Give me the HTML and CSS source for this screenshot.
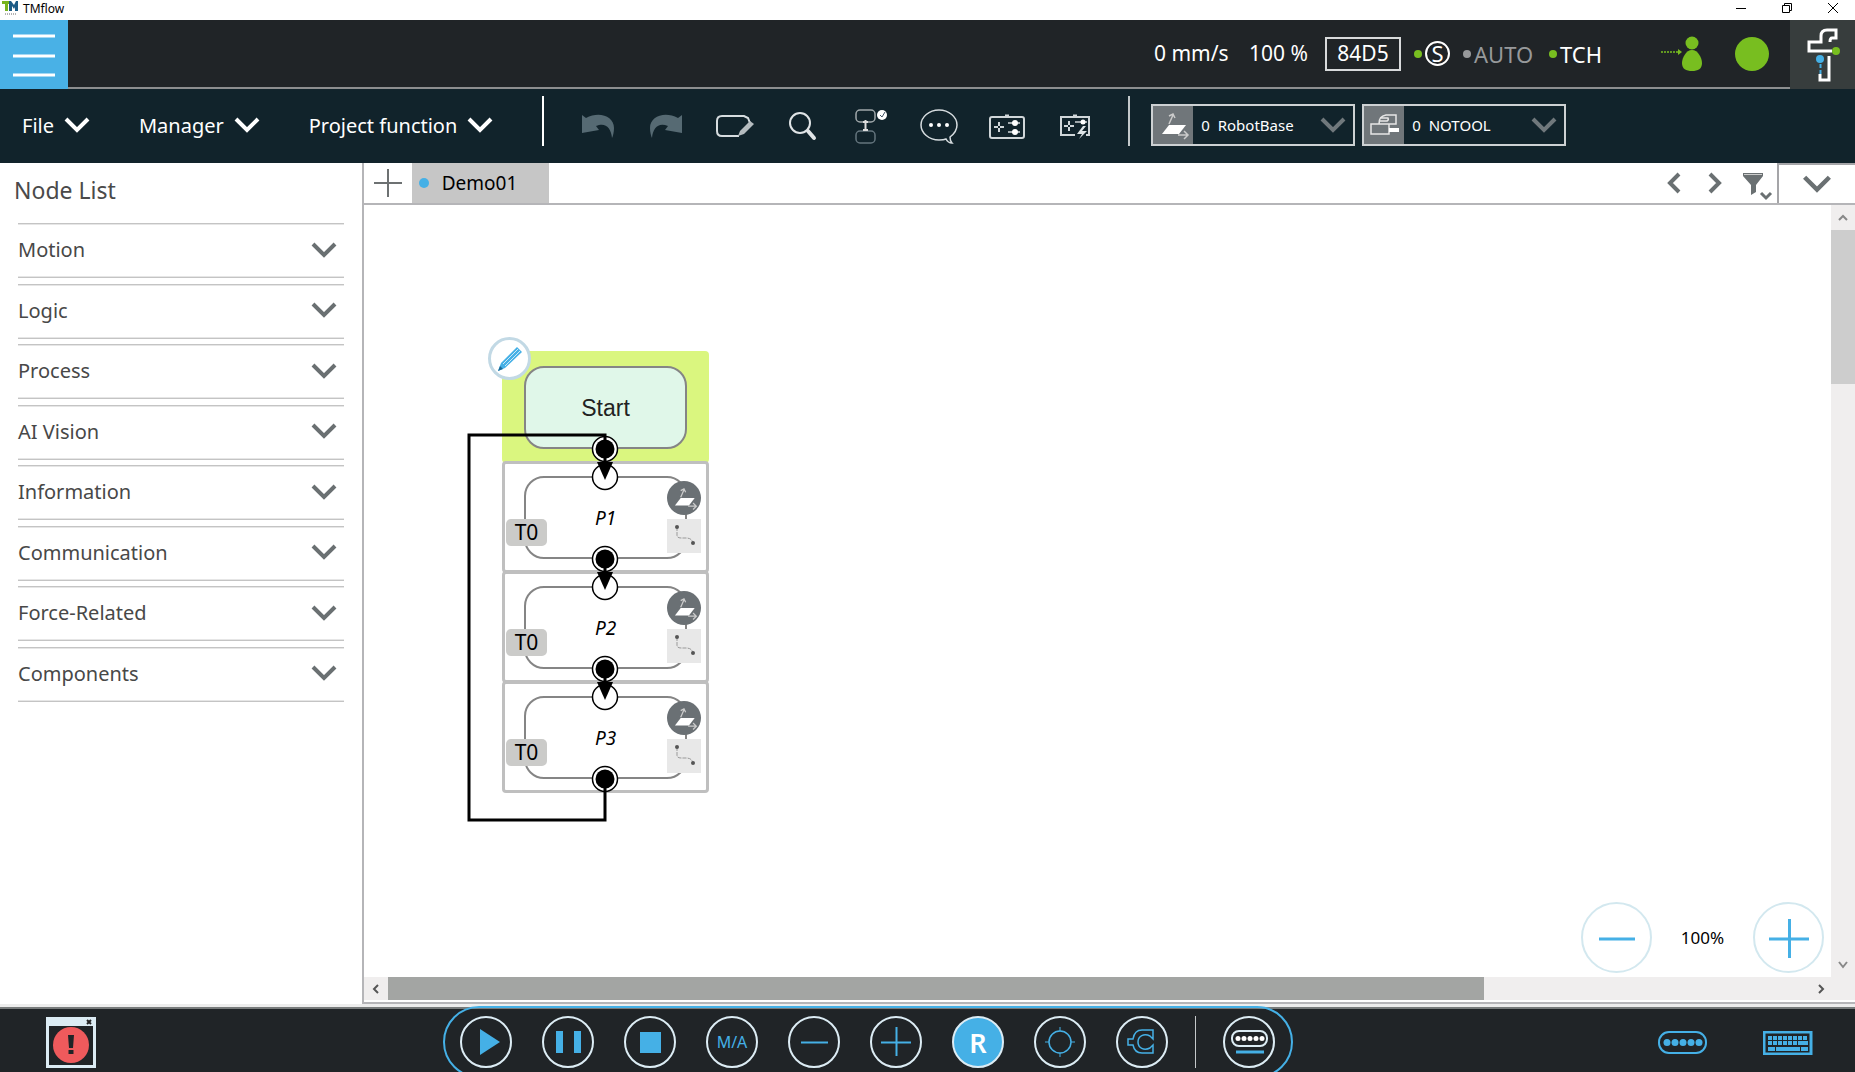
FILE: index.html
```html
<!DOCTYPE html>
<html lang="en">
<head>
<meta charset="utf-8">
<title>TMflow</title>
<link rel="stylesheet" href="styles.css">
</head>
<body>
<svg class="defs" width="0" height="0" aria-hidden="true">
  <symbol id="chev" viewBox="0 0 26 16"><path d="M2 2l11 11L24 2" fill="none" stroke="currentColor" stroke-width="4"/></symbol>
  <symbol id="base" viewBox="0 0 34 34"><path d="M13 17h17l-7 9H6z" fill="#fff"/><path d="M13 16l4-9M13 8l4-2 2 4M22 27h9M28 23l4 4-4 4" fill="none" stroke="#ccc" stroke-width="1.500"/></symbol>
</svg>
<div class="app">
  <div class="titlebar">
    <svg width="16" height="14" viewBox="0 0 16 14"><path d="M0 0h8v3H6v7H3V3H0z" fill="#78b41e"/><path d="M7 10V0h2l3 4 2-4h2v10h-3V6l-1 2-2-3v5z" fill="#1d5c86"/><path d="M3 13h11" stroke="#666" stroke-dasharray="1 1"/></svg>
    <span class="apptitle">TMflow</span>
    <button class="win" aria-label="Minimize"><svg width="12" height="12"><path d="M1 6.500h10" stroke="#000"/></svg></button>
    <button class="win" aria-label="Restore"><svg width="12" height="12"><path d="M1.500 3.500h7v7h-7zM3.500 3.500v-2h7v7h-2" fill="none" stroke="#000"/></svg></button>
    <button class="win" aria-label="Close"><svg width="12" height="12"><path d="M1 1l10 10M11 1L1 11" stroke="#000"/></svg></button>
  </div>

  <header class="header">
    <button class="burger" aria-label="Menu"><svg width="68" height="68"><path d="M13 15h42M13 35h42M13 54h42" stroke="#fff" stroke-width="3"/></svg></button>
    <div class="status">
      <span class="speed">0 mm/s</span>
      <span class="percent">100 %</span>
      <span class="code">84D5</span>
      <span class="flag safe"><i class="dot on"></i><span class="ring">S</span></span>
      <span class="flag auto"><i class="dot"></i>AUTO</span>
      <span class="flag"><i class="dot on"></i>TCH</span>
    </div>
    <svg class="person" width="42" height="36" viewBox="0 0 42 36"><g fill="#78be20"><circle cx="31" cy="7" r="6.500"/><path d="M31 14c6 0 10 8 10 13 0 6-4 8-10 8s-10-2-10-8c0-5 4-13 10-13z"/><path d="M17 13l4 3-4 3z"/></g><path d="M0 16h18" stroke="#78be20" stroke-width="1.500" stroke-dasharray="2 1"/></svg>
    <span class="lamp"></span>
    <button class="robot" aria-label="Robot"><svg width="65" height="68" viewBox="0 0 65 68"><g fill="none" stroke="#fff" stroke-width="3"><path d="M42 30H19v-9h12v-6q0-6 6-6h9v8h-4q-2 0-2 4"/><path d="M39 35v24H30V53"/></g><circle cx="46" cy="30" r="4" fill="#78be20"/><circle cx="30" cy="38" r="4" fill="#45b0e6"/><path d="M30.500 43v10" stroke="#45b0e6" stroke-width="2" stroke-dasharray="4 2"/></svg></button>
  </header>

  <nav class="toolbar">
    <button class="menu">File <svg width="26" height="16"><use href="#chev"/></svg></button>
    <button class="menu">Manager <svg width="26" height="16"><use href="#chev"/></svg></button>
    <button class="menu">Project function <svg width="26" height="16"><use href="#chev"/></svg></button>
    <span class="rule"></span>
    <div class="tools">
      <button aria-label="Undo"><svg width="40" height="40" viewBox="0 0 40 40"><path d="M4 10l4 3c13-7 28-2 28 10 0 4-1 8-2 10-1-11-7-16-16-12l3 4-17 3z" fill="#566a73"/></svg></button>
      <button aria-label="Redo"><svg width="40" height="40" viewBox="0 0 40 40"><path d="M36 10l-4 3C19 6 4 11 4 23c0 4 1 8 2 10 1-11 7-16 16-12l-3 4 17 3z" fill="#566a73"/></svg></button>
      <button aria-label="Edit"><svg width="40" height="40" viewBox="0 0 40 40"><path d="M35 18l-2-5-4-2H7q-5 0-5 5v10q0 5 5 5h17" fill="none" stroke="#d6dcdf" stroke-width="2"/><path d="M23 31l2-5 10-10 4 3-10 10z" fill="#b5bcbf"/></svg></button>
      <button aria-label="Search"><svg width="40" height="40" viewBox="0 0 40 40"><circle cx="17" cy="18" r="10" fill="none" stroke="#e0e4e6" stroke-width="2"/><path d="M25 26l6 7" stroke="#e0e4e6" stroke-width="4" stroke-linecap="round"/></svg></button>
      <button aria-label="Check flow"><svg width="40" height="40" viewBox="0 0 40 40"><g fill="none" stroke-width="1.500"><rect x="5" y="5" width="19" height="12" rx="4" stroke="#a0a8ab"/><rect x="5" y="26" width="19" height="12" rx="4" stroke="#64757e"/></g><path d="M14.500 15v10M12 17h5M12 25h5" stroke="#ddd" stroke-width="2"/><circle cx="31" cy="10" r="5" fill="#fff"/><path d="M29 10l2 2 3-5" fill="none" stroke="#456"/></svg></button>
      <button aria-label="Comment"><svg width="40" height="40" viewBox="0 0 40 40"><path d="M31 32c4-3 7-7 7-12 0-8-8-15-18-15S2 12 2 20s8 15 18 15c3 0 5 0 7-1q2 4 6 4-2-2-2-6z" fill="none" stroke="#d6dcdf" stroke-width="1.500"/><g fill="#fff"><circle cx="12" cy="20" r="2"/><circle cx="20" cy="20" r="2"/><circle cx="28" cy="20" r="2"/></g></svg></button>
      <button aria-label="Controller"><svg width="40" height="40" viewBox="0 0 40 40"><g fill="none" stroke="#d0d6d9" stroke-width="2"><rect x="3" y="12" width="34" height="21" rx="2"/><path d="M18 11h4" stroke-width="3"/><path d="M7 22h10M12 17v10" stroke-dasharray="4 2"/><path d="M21 18h12M21 27h12" stroke-width="1.500"/></g><circle cx="28" cy="18" r="3" fill="#fff"/><circle cx="28" cy="27" r="3" fill="#fff"/></svg></button>
      <button aria-label="Quick controller"><svg width="40" height="40" viewBox="0 0 40 40"><g fill="none" stroke="#d0d6d9" stroke-width="2"><path d="M20 30H6V12h28v18h-3"/><path d="M18 11h4" stroke-width="3"/><path d="M9 21h10M14 16v10" stroke-dasharray="4 2"/><path d="M20 17h12" stroke-width="1.500"/></g><circle cx="28" cy="17" r="2.500" fill="#fff"/><path d="M28 21l-6 8h5l-3 5 8-8h-5l4-5z" fill="#dfe5e8"/></svg></button>
    </div>
    <span class="rule second"></span>
    <label class="combo"><span class="comboicon"><svg width="36" height="34"><use href="#base"/></svg></span>
      <select aria-label="Base"><option>0&nbsp; RobotBase</option></select>
      <svg class="arrow" width="26" height="16"><use href="#chev"/></svg></label>
    <label class="combo"><span class="comboicon"><svg width="36" height="34" viewBox="0 0 36 34"><path d="M5 16h18v10H5zM13 16c0-6 2-8 7-9h10v9h-7M14 13h7q2-1 1-3H15" fill="none" stroke="#e6e6e6" stroke-width="1.500"/><path d="M23 20h10v4H23z" fill="#fff"/></svg></span>
      <select aria-label="Tool"><option>0&nbsp; NOTOOL</option></select>
      <svg class="arrow" width="26" height="16"><use href="#chev"/></svg></label>
  </nav>

  <main class="work">
    <aside class="sidebar">
      <h2>Node List</h2>
      <div class="groups">
        <button>Motion <svg width="26" height="16"><use href="#chev"/></svg></button>
        <button>Logic <svg width="26" height="16"><use href="#chev"/></svg></button>
        <button>Process <svg width="26" height="16"><use href="#chev"/></svg></button>
        <button>AI Vision <svg width="26" height="16"><use href="#chev"/></svg></button>
        <button>Information <svg width="26" height="16"><use href="#chev"/></svg></button>
        <button>Communication <svg width="26" height="16"><use href="#chev"/></svg></button>
        <button>Force-Related <svg width="26" height="16"><use href="#chev"/></svg></button>
        <button>Components <svg width="26" height="16"><use href="#chev"/></svg></button>
      </div>
    </aside>
    <section class="editor">
      <div class="tabs">
        <button class="add" aria-label="Add tab"><svg width="30" height="30"><path d="M1 15h28M15 1v28" stroke="#6d7172" stroke-width="2"/></svg></button>
        <button class="tab"><i></i>Demo01</button>
        <div class="tabtools">
          <button aria-label="Previous"><svg width="14" height="22"><path d="M12 2L3 11l9 9" fill="none" stroke="#6a7072" stroke-width="4"/></svg></button>
          <button aria-label="Next"><svg width="14" height="22"><path d="M2 2l9 9-9 9" fill="none" stroke="#6a7072" stroke-width="4"/></svg></button>
          <button aria-label="Filter"><svg width="32" height="30"><path d="M2 2h20v3l-7 9v7l-5 3V14L2 5z" fill="#6a7072"/><path d="M3 3.500h18" stroke="#ccc"/><path d="M20 22l5 5 5-5" fill="none" stroke="#6a7072" stroke-width="3"/></svg></button>
        </div>
        <button class="more" aria-label="More tabs"><svg width="30" height="18" viewBox="0 0 26 16"><use href="#chev"/></svg></button>
      </div>
      <div class="canvas">
        <div class="frame start"><div class="node">Start</div></div>
        <div class="frame p1"><div class="node">P1</div><span class="tool">T0</span><span class="basebadge"><svg width="28" height="28"><use href="#base"/></svg></span><span class="path"><svg width="34" height="34"><path d="M10 8v8q0 3 4 3h5q6 0 7 5" fill="none" stroke="#999" stroke-dasharray="4 1"/><circle cx="10" cy="8" r="2" fill="#555"/><circle cx="26" cy="24" r="2" fill="#555"/></svg></span></div>
        <div class="frame p2"><div class="node">P2</div><span class="tool">T0</span><span class="basebadge"><svg width="28" height="28"><use href="#base"/></svg></span><span class="path"><svg width="34" height="34"><path d="M10 8v8q0 3 4 3h5q6 0 7 5" fill="none" stroke="#999" stroke-dasharray="4 1"/><circle cx="10" cy="8" r="2" fill="#555"/><circle cx="26" cy="24" r="2" fill="#555"/></svg></span></div>
        <div class="frame p3"><div class="node">P3</div><span class="tool">T0</span><span class="basebadge"><svg width="28" height="28"><use href="#base"/></svg></span><span class="path"><svg width="34" height="34"><path d="M10 8v8q0 3 4 3h5q6 0 7 5" fill="none" stroke="#999" stroke-dasharray="4 1"/><circle cx="10" cy="8" r="2" fill="#555"/><circle cx="26" cy="24" r="2" fill="#555"/></svg></span></div>
        <svg class="wires" width="380" height="640">
          <defs><g id="port"><circle r="12.500" fill="#fff" stroke="#000" stroke-width="1.500"/><circle r="9.500"/></g>
          <g id="link"><circle cy="28" r="12.500" fill="#fff" stroke="#000" stroke-width="1.500"/><path d="M0 0v16" stroke="#000" stroke-width="3"/><path d="M-8 13H8L0 31z"/></g></defs>
          <use href="#port" x="241" y="244"/><use href="#link" x="241" y="244"/>
          <use href="#port" x="241" y="354"/><use href="#link" x="241" y="354"/>
          <use href="#port" x="241" y="464"/><use href="#link" x="241" y="464"/>
          <use href="#port" x="241" y="574"/>
          <path d="M241 574v41H105V230h136v10" fill="none" stroke="#000" stroke-width="3"/>
        </svg>
        <button class="pencil" aria-label="Edit start"><svg width="38" height="38"><path d="M7 31l3-8L26 7l5 5-17 16z" fill="#45b0e6"/><path d="M12 24L27 9M14 26l15-15" stroke="#cbe8f7"/><path d="M7 31l2-5 3 3z" fill="#1a6a98"/></svg></button>
        <div class="zoom">
          <button aria-label="Zoom out"><svg width="66" height="66"><path d="M15 34h36" stroke="#45b0e6" stroke-width="3"/></svg></button>
          <span>100%</span>
          <button aria-label="Zoom in"><svg width="66" height="66"><path d="M13 34h40M33.500 14v39" stroke="#45b0e6" stroke-width="3"/></svg></button>
        </div>
      </div>
      <div class="vbar"><button aria-label="Up"><svg width="10" height="8"><path d="M1 6l4-4 4 4" fill="none" stroke="#888" stroke-width="2"/></svg></button><span></span><button class="last" aria-label="Down"><svg width="10" height="8"><path d="M1 1l4 5 4-5" fill="none" stroke="#888" stroke-width="2"/></svg></button></div>
      <div class="hbar"><button aria-label="Left"><svg width="8" height="10"><path d="M6 1L2 5l4 4" fill="none" stroke="#555" stroke-width="2"/></svg></button><span></span><button class="last" aria-label="Right"><svg width="8" height="10"><path d="M2 1l4 4-4 4" fill="none" stroke="#555" stroke-width="2"/></svg></button></div>
    </section>
  </main>

  <footer class="footer">
    <button class="alert" aria-label="Errors"><svg width="50" height="51"><rect x="1.500" y="1.500" width="47" height="48" fill="none" stroke="#dcecf4" stroke-width="3"/><path d="M1 1h48v8H1z" fill="#dcecf4"/><path d="M41 3l4 4M45 3l-4 4" stroke="#222" stroke-width="2"/><circle cx="25" cy="28" r="18" fill="#ef5a5c"/><path d="M22 18h6l-1 13h-4zM22.500 33h5v4h-5z" fill="#202427"/></svg></button>
    <div class="dock">
      <button aria-label="Play"><svg viewBox="0 0 48 48"><path d="M18 11v26l20-13z" fill="#45b0e6"/></svg></button>
      <button aria-label="Pause"><svg viewBox="0 0 48 48"><path d="M12 13h7v22h-7zM30 13h7v22h-7z" fill="#45b0e6"/></svg></button>
      <button aria-label="Stop"><svg viewBox="0 0 48 48"><path d="M14 14h21v21H14z" fill="#45b0e6"/></svg></button>
      <button class="ma">M/A</button>
      <button aria-label="Slower"><svg viewBox="0 0 48 48"><path d="M11 24.500h27" stroke="#45b0e6" stroke-width="2"/></svg></button>
      <button aria-label="Faster"><svg viewBox="0 0 48 48"><path d="M9 24.500h30M24.500 9v29" stroke="#45b0e6" stroke-width="2"/></svg></button>
      <button class="r">R</button>
      <button aria-label="Target"><svg viewBox="0 0 48 48"><circle cx="24" cy="24" r="11" fill="none" stroke="#45b0e6" stroke-width="1.500"/><path d="M24 9v4M24 35v4M9 24h4M35 24h4" stroke="#45b0e6"/></svg></button>
      <button aria-label="Gripper"><svg viewBox="0 0 48 48"><path d="M35 12v9l-3-3c-6-3-12 0-12 6s6 9 12 6l3-3v8H24c-5 0-8-3-9-8h-5v-6h5c1-6 4-9 9-9z" fill="none" stroke="#45b0e6" stroke-width="1.500"/></svg></button>
      <span class="dockrule"></span>
      <button aria-label="Panel"><svg viewBox="0 0 48 48"><rect x="7" y="13" width="35" height="15" rx="7" fill="none" stroke="#dcecf4" stroke-width="2"/><g fill="#fff"><circle cx="13" cy="20.500" r="2.500"/><circle cx="19" cy="20.500" r="2.500"/><circle cx="25" cy="20.500" r="2.500"/><circle cx="31" cy="20.500" r="2.500"/><circle cx="37" cy="20.500" r="2.500"/></g><path d="M11 34h28" stroke="#45b0e6" stroke-width="3"/></svg></button>
    </div>
    <div class="keys">
      <button aria-label="Stick"><svg width="50" height="24"><rect x="1" y="1" width="47" height="21" rx="10" fill="none" stroke="#45b0e6" stroke-width="2"/><g fill="#45b0e6"><circle cx="9" cy="11.500" r="3.500"/><circle cx="17" cy="11.500" r="3.500"/><circle cx="25" cy="11.500" r="3.500"/><circle cx="33" cy="11.500" r="3.500"/><circle cx="41" cy="11.500" r="3.500"/></g></svg></button>
      <button aria-label="Keyboard"><svg width="50" height="24"><rect x="1" y="1" width="47" height="22" fill="none" stroke="#45b0e6" stroke-width="3"/><path d="M5 7h40M5 12h32" stroke="#45b0e6" stroke-width="4" stroke-dasharray="4 1"/><path d="M37 12h8M5 18h7M13 18h24M38 18h7" stroke="#45b0e6" stroke-width="4"/></svg></button>
    </div>
  </footer>
</div>
</body>
</html>
```
FILE: styles.css
```css
* { box-sizing: border-box; }
body { margin: 0; height: 100vh; overflow: hidden; background: #fff; font-family: "Noto Sans", "Open Sans", sans-serif; color: #000; }
button { border: 0; padding: 0; margin: 0; background: none; font: inherit; color: inherit; display: flex; align-items: center; justify-content: center; }
svg { display: block; flex: none; }
.defs { position: absolute; }
.app { height: 100vh; display: grid; grid-template-rows: 20px 69px 74px minmax(0, 1fr) 65px; overflow: hidden; }

.titlebar { display: flex; align-items: center; padding: 0 12px 4px 2px; }
.apptitle { font-size: 12px; margin-left: 5px; flex: 1; }
.win { width: 20px; margin-left: 26px; }

.header { display: flex; align-items: center; background: #202427; color: #fff; border-bottom: 2px solid #8c8e8f; font-size: 21px; }
.burger { background: #49b1e6; width: 68px; height: 69px; margin-bottom: -2px; }
.status { display: flex; align-items: center; margin-left: auto; }
.speed { width: 95px; }
.percent { width: 76px; }
.speed, .percent { padding-bottom: 2px; }
.code { width: 76px; height: 34px; border: 2px solid #d8dadb; text-align: center; line-height: 29px; margin-right: 13px; }
.flag { display: flex; align-items: center; gap: 3px; font-size: 22px; }
.safe { margin-right: 13px; }
.auto { color: #97999b; width: 86px; }
.dot { width: 8px; height: 8px; border-radius: 50%; background: #97999b; }
.dot.on { background: #78be20; }
.ring { width: 25px; height: 25px; border: 2px solid #fff; border-radius: 50%; text-align: center; line-height: 21px; }
.person { margin-left: 59px; }
.lamp { width: 34px; height: 34px; border-radius: 50%; background: #78be20; margin: 0 21px 0 32px; }
.robot { background: #373d3d; width: 65px; height: 69px; margin-bottom: -2px; }

.toolbar { display: flex; align-items: center; background: #11232b; color: #fff; padding: 0 0 2px 22px; font-size: 20px; }
.menu { gap: 10px; margin-right: 49px; white-space: nowrap; }
.rule { width: 2px; height: 50px; background: #fff; margin: 0 34px 8px 0; }
.rule.second { background: #c3c8ca; margin: 0 21px 8px 33px; }
.tools { display: flex; flex: 0 1 517px; justify-content: space-between; }
.combo { display: flex; align-items: center; position: relative; width: 204px; height: 42px; border: 2px solid #cdd1d3; margin-right: 7px; }
.comboicon { background: #70767a; width: 40px; height: 38px; display: grid; place-items: center; }
.combo select { appearance: none; flex: 1; height: 38px; border: 0; padding: 0 0 0 8px; background: transparent; color: #fff; font: 15px "Noto Sans", sans-serif; }
.arrow { position: absolute; right: 7px; color: #70787c; pointer-events: none; }

.work { display: grid; grid-template-columns: 362px minmax(0, 1fr); border-bottom: 3px solid #ededed; min-height: 0; }
.sidebar h2 { margin: 0; padding: 9px 14px 0; font-size: 23px; line-height: 36px; font-weight: 400; color: #4a4a4a; }
.groups { display: flex; flex-direction: column; justify-content: space-between; height: 479px; margin: 15px 18px 0; }
.groups button { justify-content: space-between; height: 55px; padding: 0 7px 2px 0; border: solid #c4c4c4; border-width: 1px 0; box-shadow: inset 0 1px #e6e6e6, inset 0 -1px #e6e6e6; font-size: 20px; color: #484848; }
.groups svg { color: #6a7072; }
.editor { display: grid; grid-template: 42px minmax(0, 1fr) 25px / minmax(0, 1fr) 24px; border-left: 2px solid #b5b5b8; border-bottom: 2px solid #b5b5b8; }
.tabs { grid-column: 1 / 3; display: flex; border-bottom: 2px solid #b5b5b8; }
.add { width: 48px; }
.tab { width: 137px; background: #c6c6c6; gap: 13px; padding-right: 25px; font-size: 19px; }
.tab i { width: 10px; height: 10px; border-radius: 50%; background: #45b0e6; }
.tabtools { margin-left: auto; display: flex; gap: 27px; padding-right: 4px; }
.tabtools button:last-child { margin: 6px 0 0 -8px; }
.more { width: 78px; border: 2px solid #a5a5a8; border-width: 2px 0 0 2px; color: #6a7072; }

.canvas { position: relative; overflow: hidden; }
.frame { position: absolute; left: 138px; width: 207px; height: 112px; border: 3px solid #bfbfbf; border-radius: 4px; }
.start { top: 146px; border-color: #daf67f; background: #daf67f; }
.p1 { top: 256px; }
.p2 { top: 366px; }
.p3 { top: 476px; }
.node { position: absolute; left: 19px; top: 12px; width: 163px; height: 83px; border: 2px solid #858585; border-radius: 20px; display: grid; place-items: center; font-size: 19px; font-style: italic; }
.start .node { background: #e0f7e9; font-family: "Liberation Sans", sans-serif; font-style: normal; font-size: 23px; color: #222; padding-top: 2px; }
.tool { position: absolute; left: 1px; top: 55px; width: 41px; height: 27px; line-height: 27px; border-radius: 5px; background: #cbcbc9; text-align: center; font-size: 21px; }
.basebadge { position: absolute; left: 162px; top: 17px; width: 34px; height: 34px; border-radius: 50%; background: #6a7074; display: grid; place-items: center; }
.path { position: absolute; left: 162px; top: 55px; background: #e8e8e8; }
.wires { position: absolute; left: 0; top: 0; }
.pencil { position: absolute; left: 124px; top: 132px; width: 43px; height: 43px; border: 3px solid #c2d9e5; border-radius: 50%; background: #fff; }
.zoom { position: absolute; right: 7px; bottom: 4px; display: flex; align-items: center; font-size: 17px; }
.zoom button { width: 71px; height: 71px; border: 2px solid #d3e8ef; border-radius: 50%; background: #fff; }
.zoom span { width: 101px; text-align: center; }
.vbar, .hbar { background: #f0eeee; display: flex; }
.vbar { flex-direction: column; }
.vbar button { height: 25px; }
.vbar span { background: #cdcdcd; flex: 0 0 20%; }
.vbar .last { margin-top: auto; }
.hbar { grid-column: 1 / 3; border-bottom: 2px solid #fff; }
.hbar button { width: 24px; }
.hbar span { background: #a3a5a3; flex: 0 0 73.5%; }
.hbar .last { margin: 0 22px 0 auto; }

.footer { display: grid; grid-template-columns: 443px 850px minmax(0, 1fr); background: #202427; border-top: 2px solid #777b7b; }
.alert { margin: 8px 0 0 46px; align-self: start; justify-self: start; }
.dock { display: flex; align-items: center; gap: 30px; height: 72px; margin: -3px 0 0; padding: 0 15px; border: 2px solid #45b0e6; border-radius: 36px; }
.dock button { width: 52px; height: 52px; flex: none; border: 2px solid #dcecf4; border-radius: 50%; color: #45b0e6; }
.dock svg { width: 48px; height: 48px; }
.dock .ma { font-size: 16px; }
.dock .r { background: #45b0e6; color: #fff; font-size: 27px; font-weight: 600; }
.dockrule { width: 1px; height: 52px; background: #c4c8ca; margin: 0 -3px; }
.keys { display: flex; justify-content: flex-end; align-items: flex-start; gap: 55px; padding: 22px 42px 0 0; }
```
